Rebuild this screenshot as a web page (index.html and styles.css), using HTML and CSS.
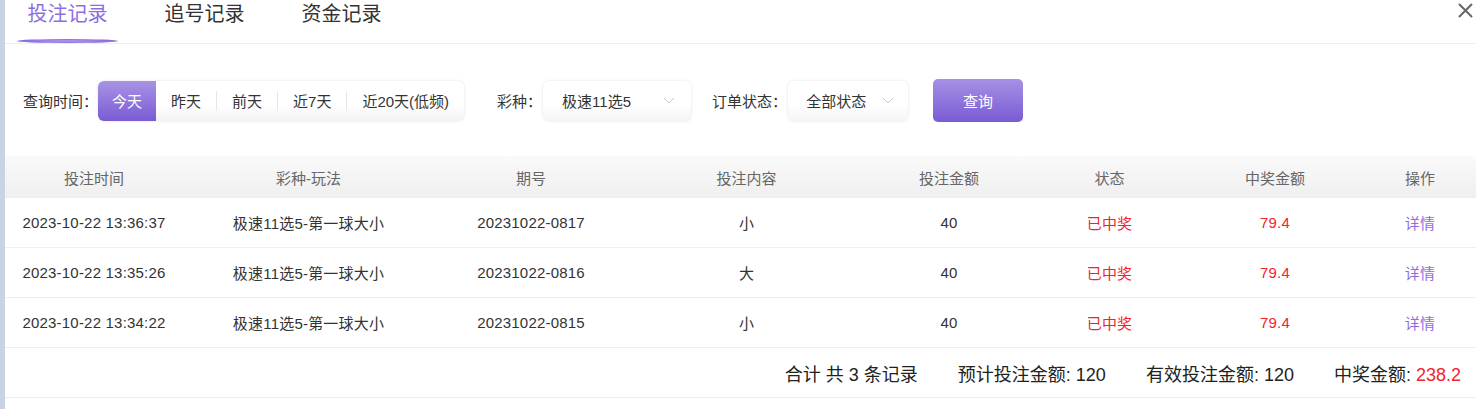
FILE: index.html
```html
<!DOCTYPE html>
<html lang="zh-CN">
<head>
  <meta charset="UTF-8" />
  <title>投注记录</title>
  <link rel="stylesheet" href="styles.css">
</head>
<body>
  <div class="panel">

    <div class="tabs">
      <div class="tab active">投注记录</div>
      <div class="tab">追号记录</div>
      <div class="tab">资金记录</div>
      <svg class="close" width="17" height="17" viewBox="0 0 17 17">
        <path d="M2 2L15 15M15 2L2 15" stroke="#666" stroke-width="2" fill="none" />
      </svg>
    </div>

    <div class="filters">
      <span class="label">查询时间：</span>
      <div class="range">
        <span class="range-item on">今天</span>
        <span class="range-item">昨天</span>
        <span class="range-item">前天</span>
        <span class="range-item">近7天</span>
        <span class="range-item">近20天(低频)</span>
      </div>

      <span class="label game-label">彩种：</span>
      <div class="select game">
        <span>极速11选5</span>
        <svg width="12" height="7" viewBox="0 0 12 7"><path d="M1 1L6 6L11 1" stroke="#c8c8c8" fill="none" /></svg>
      </div>

      <span class="label status-label">订单状态：</span>
      <div class="select status">
        <span>全部状态</span>
        <svg width="12" height="7" viewBox="0 0 12 7"><path d="M1 1L6 6L11 1" stroke="#c8c8c8" fill="none" /></svg>
      </div>

      <button class="search">查询</button>
    </div>

    <table class="records">
      <colgroup>
        <col style="width:178px"><col style="width:251px"><col style="width:194px"><col style="width:237px">
        <col style="width:168px"><col style="width:153px"><col style="width:178px"><col style="width:112px">
      </colgroup>
      <thead>
        <tr>
          <th>投注时间</th><th>彩种-玩法</th><th>期号</th><th>投注内容</th>
          <th>投注金额</th><th>状态</th><th>中奖金额</th><th>操作</th>
        </tr>
      </thead>
      <tbody>
        <tr>
          <td>2023-10-22 13:36:37</td><td>极速11选5-第一球大小</td><td>20231022-0817</td><td>小</td>
          <td>40</td><td class="red">已中奖</td><td class="red">79.4</td><td class="link">详情</td>
        </tr>
        <tr>
          <td>2023-10-22 13:35:26</td><td>极速11选5-第一球大小</td><td>20231022-0816</td><td>大</td>
          <td>40</td><td class="red">已中奖</td><td class="red">79.4</td><td class="link">详情</td>
        </tr>
        <tr>
          <td>2023-10-22 13:34:22</td><td>极速11选5-第一球大小</td><td>20231022-0815</td><td>小</td>
          <td>40</td><td class="red">已中奖</td><td class="red">79.4</td><td class="link">详情</td>
        </tr>
      </tbody>
    </table>

    <div class="totals">
      <span>合计 共 3 条记录</span>
      <span>预计投注金额: 120</span>
      <span>有效投注金额: 120</span>
      <span>中奖金额: <em>238.2</em></span>
    </div>

  </div>
</body>
</html>
```

FILE: styles.css
```css
body {
  margin: 0;
  background: #fff;
  font-family: "Liberation Sans", "Noto Sans CJK SC", sans-serif;
  color: #333;
  overflow: hidden;
}

.panel {
  border-left: 5px solid #cad3e3;
  min-height: 409px;
  box-sizing: border-box;
}

.tabs {
  display: flex;
  align-items: flex-start;
  gap: 36px;
  padding-left: 12px;
  height: 43px;
  border-bottom: 1px solid #eeeeee;
}

.tab {
  display: flex;
  flex-direction: column;
  align-items: center;
  width: 101px;
  font-size: 20px;
  line-height: 28px;
  color: #333;
}

.tab.active {
  color: #8b6fe0;
}

.tab.active::after {
  content: "";
  display: block;
  width: 101px;
  height: 4px;
  margin-top: 11px;
  border-radius: 50%;
  background: radial-gradient(ellipse at center, #b49cf2 0%, #8f72e2 55%, #7a5bd6 100%);
}

.close {
  margin-left: auto;
  margin-top: 2px;
  margin-right: 2px;
}

.filters {
  display: flex;
  align-items: center;
  padding: 35px 0 0 18px;
  font-size: 15px;
}

.label {
  color: #333;
}

.game-label { margin-left: 33px; }
.status-label { margin-left: 21px; }

.range {
  display: flex;
  align-items: center;
  height: 40px;
  border-radius: 6px;
  background: linear-gradient(#fff 60%, #f3f3f3);
  box-shadow: 0 0 3px rgba(0, 0, 0, 0.12);
}

.range-item {
  padding: 0 15px;
  border-left: 1px solid #e6e6e6;
  height: 20px;
  display: flex;
  align-items: center;
}

.range-item:nth-child(2) { border-left: none; }

.range-item.on {
  height: 40px;
  padding: 0 14px;
  border-left: none;
  border-radius: 6px 0 0 6px;
  color: #fff;
  background: linear-gradient(#a893e6, #7a5bd4);
}

.select {
  display: flex;
  align-items: center;
  justify-content: space-between;
  height: 40px;
  margin-left: 1px;
  box-sizing: border-box;
  padding: 0 16px 0 19px;
  border-radius: 6px;
  background: linear-gradient(#fff 60%, #f4f4f4);
  box-shadow: 0 0 3px rgba(0, 0, 0, 0.12);
}

.select.game { width: 148px; }
.select.status { width: 120px; padding-left: 18px; padding-right: 14px; }

.search {
  margin-left: 25px;
  width: 90px;
  height: 43px;
  border: none;
  border-radius: 5px;
  color: #fff;
  font-family: inherit;
  font-size: 15px;
  background: linear-gradient(#a591e4, #7a5bd4);
  cursor: pointer;
}

.records {
  margin-top: 34px;
  width: 1471px;
  border-collapse: collapse;
  table-layout: fixed;
  font-size: 15px;
}

.records th {
  height: 42px;
  font-weight: normal;
  color: #666;
  background: linear-gradient(#fafafa, #efefef);
  padding: 0;
}

.records td {
  height: 49px;
  text-align: center;
  padding: 0;
  border-bottom: 1px solid #eeeeee;
  color: #333;
  letter-spacing: 0.2px;
}

.records td.red { color: #f5222d; }
.records td.link { color: #8b6fe0; }

.totals {
  display: flex;
  justify-content: flex-end;
  align-items: center;
  gap: 40px;
  height: 49px;
  padding-right: 15px;
  border-bottom: 1px solid #ebebf3;
  font-size: 18px;
  color: #222;
}

.totals em {
  font-style: normal;
  color: #f5222d;
}
```
